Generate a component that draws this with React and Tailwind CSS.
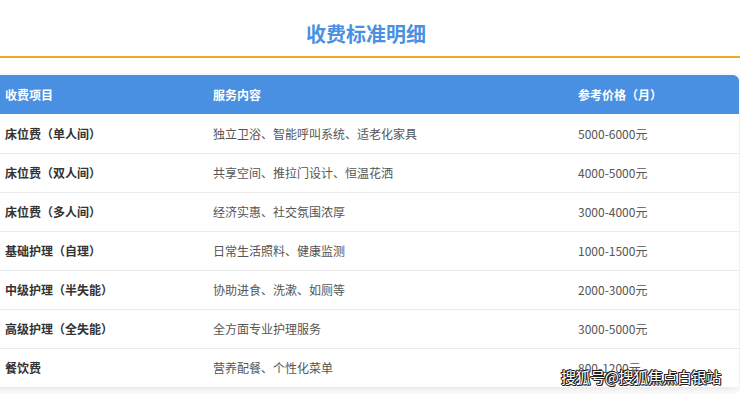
const rows = [
  ["床位费（单人间）", "独立卫浴、智能呼叫系统、适老化家具", "5000-6000元"],
  ["床位费（双人间）", "共享空间、推拉门设计、恒温花洒", "4000-5000元"],
  ["床位费（多人间）", "经济实惠、社交氛围浓厚", "3000-4000元"],
  ["基础护理（自理）", "日常生活照料、健康监测", "1000-1500元"],
  ["中级护理（半失能）", "协助进食、洗漱、如厕等", "2000-3000元"],
  ["高级护理（全失能）", "全方面专业护理服务", "3000-5000元"],
  ["餐饮费", "营养配餐、个性化菜单", "800-1200元"],
];

export default function App() {
  return (
    <div className="relative w-[740px] h-[394px] overflow-hidden bg-white font-['Noto_Sans_CJK_SC','Noto_Sans',sans-serif]">
      <h2 className="pt-5 pr-2 h-[48px] text-center text-[20px] leading-[28px] font-bold text-[#4a90e2]">
        收费标准明细
      </h2>
      <div className="mt-2 h-[2px] bg-[#f5a623]" />

      <div className="mt-[17px] -ml-[10px] w-[749px] rounded-t-[6px] bg-white shadow-[0_2px_8px_rgba(0,0,0,0.12)] overflow-hidden">
        <div className="grid grid-cols-[208px_365px_1fr] h-[39px] items-center bg-[#4a90e2] text-white text-[12px] font-bold">
          <div className="pl-[15px]">收费项目</div>
          <div className="pl-[15px]">服务内容</div>
          <div className="pl-[15px]">参考价格（月）</div>
        </div>
        {rows.map((r, i) => (
          <div
            key={i}
            className={
              "grid grid-cols-[208px_365px_1fr] h-[39px] items-center text-[12px] " +
              (i > 0 ? "border-t border-[#ebebeb]" : "")
            }
          >
            <div className="pl-[15px] font-bold text-[#333]">{r[0]}</div>
            <div className="pl-[15px] text-[#555]">{r[1]}</div>
            <div className="pl-[15px] text-[#555]">{r[2]}</div>
          </div>
        ))}
      </div>

      <div className="absolute left-[561px] top-[367px] text-[15px] leading-[20px] text-white tracking-[-0.4px] [text-shadow:1px_0_0_#222,-1px_0_0_#222,0_1px_0_#222,0_-1px_0_#222,1px_1px_0_#222,-1px_-1px_0_#222]">
        搜狐号@搜狐焦点白银站
      </div>
    </div>
  );
}
